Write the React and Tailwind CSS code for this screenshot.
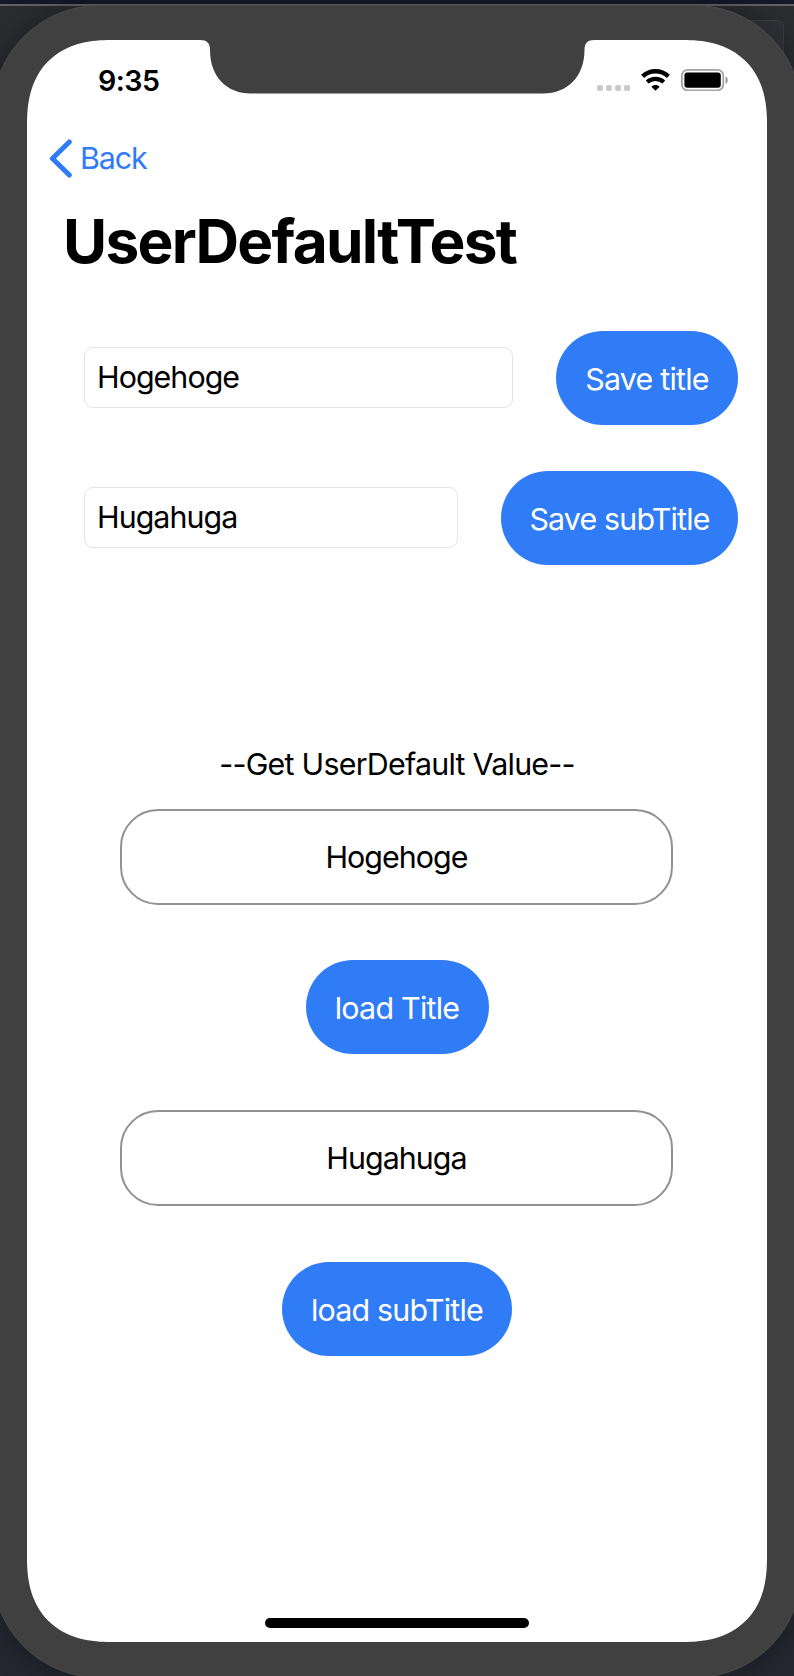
function Notch() {
  return (
    <svg className="absolute left-[173px] top-0" width="395" height="54" viewBox="0 0 395 54" fill="#404040">
      <path d="M0 -1V0C7 0 10 3 10 10C10 36 26 53.5 51 53.5H343C368 53.5 384.5 36 384.5 10C384.5 3 387.5 0 394.5 0V-1Z" />
    </svg>
  );
}

function StatusBar() {
  return (
    <div className="flex h-[80px] items-start pl-[71px]">
      <div className="mt-[23px] w-[64px] text-[28.6px] leading-[36px] font-semibold tracking-[-0.55px] whitespace-nowrap">9:35</div>
      <div className="mt-[29px] ml-[435px] flex items-start">
        <div className="mt-[16px] flex gap-[3px]">
          <span className="size-[6px] rounded-[2px] bg-[#cbcbcb]" />
          <span className="size-[6px] rounded-[2px] bg-[#cbcbcb]" />
          <span className="size-[6px] rounded-[2px] bg-[#cbcbcb]" />
          <span className="size-[6px] rounded-[2px] bg-[#cbcbcb]" />
        </div>
        <svg className="ml-[11px]" width="29" height="22" viewBox="0 0 29 22" fill="none" stroke="#000">
          <path d="M1.6 7.3C9 0.6 20 0.6 27.4 7.3" strokeWidth="4.5" />
          <path d="M6.2 13C11 8.7 18 8.7 22.8 13" strokeWidth="4.3" />
          <path d="M14.5 21.8L10.3 17.7C12.7 15.4 16.3 15.4 18.7 17.7Z" fill="#000" stroke="none" />
        </svg>
        <svg className="ml-[11px]" width="48" height="22" viewBox="0 0 48 22">
          <rect x="0.9" y="0.9" width="41.4" height="20.4" rx="5.6" fill="none" stroke="#a3a3a3" strokeWidth="1.8" />
          <rect x="3.4" y="3.4" width="36.4" height="15.4" rx="3" fill="#000" />
          <path d="M44.6 7.4C47.4 8.6 47.4 13.6 44.6 14.8Z" fill="#8f8f8f" />
        </svg>
      </div>
    </div>
  );
}

function Pill({ children, className }) {
  return (
    <button className={"flex h-[94px] shrink-0 items-center justify-center rounded-full bg-[#307cf7] text-[30.4px] text-white whitespace-nowrap " + className}>
      <span className="pt-[3px]">{children}</span>
    </button>
  );
}

function Field({ value, className }) {
  return (
    <div className={"mb-[2px] h-[61px] rounded-[9px] border border-[#e4e4e4] pl-[12px] text-[30.4px] leading-[58px] tracking-[-0.95px] " + className}>{value}</div>
  );
}

function ValueBox({ children }) {
  return (
    <div className="mr-px flex h-[96px] w-[553px] items-center justify-center rounded-[38px] border-2 border-[#929295] pt-[2px] text-[30.4px] tracking-[-0.95px]">
      {children}
    </div>
  );
}

export default function App() {
  return (
    <div className="relative h-[1676px] w-[794px] overflow-hidden bg-linear-to-b from-[#2a2c2f] to-[#242730] font-[Inter,sans-serif] text-black">
      <div className="h-[4px] bg-[#141a29]" />
      <div className="h-[2px] bg-[#626366]" />
      <div className="absolute top-[20px] right-[10px] h-[80px] w-[60px] rounded-[6px] border border-[#3d3e42] bg-[#313237]" />
      <div className="absolute top-[5px] left-[-8px] h-[1673px] w-[810px] rounded-[107px] border border-[#4a4a4a] bg-[#404040] px-[34px] pt-[34px] shadow-[0_0_30px_rgba(0,0,0,0.35)]">
        <div className="relative h-[1602px] w-[740px] overflow-hidden rounded-[84px] bg-white [corner-shape:superellipse(1.25)]">
          <Notch />
          <StatusBar />
          <div className="mt-[17px] flex h-[42px] items-center pl-[22px] text-[#307cf7]">
            <svg width="24" height="40" viewBox="0 0 24 40" fill="none" stroke="currentColor" strokeWidth="5" strokeLinecap="round" strokeLinejoin="round">
              <path d="M20.3 4L3.4 20.5L20.3 37" />
            </svg>
            <span className="ml-[7px] pt-px text-[30.4px] tracking-[-1.1px]">Back</span>
          </div>
          <h1 className="mt-[27px] mb-[53px] pl-[36px] text-[60.3px] leading-[72px] font-bold tracking-[-1.7px] whitespace-nowrap">UserDefaultTest</h1>

          <div className="flex items-center pl-[57px]">
            <Field value="Hogehoge" className="w-[429px]" />
            <Pill className="ml-[43px] w-[182px] tracking-[-0.75px]">Save title</Pill>
          </div>
          <div className="mt-[46px] flex items-center pl-[57px]">
            <Field value="Hugahuga" className="w-[374px]" />
            <Pill className="ml-[43px] w-[237px] tracking-[-0.85px]">Save subTitle</Pill>
          </div>

          <div className="mt-[179px] flex flex-col items-center">
            <div className="text-[30.4px] leading-[40px] tracking-[-0.75px] whitespace-nowrap">--Get UserDefault Value--</div>
            <div className="h-[25px]" />
            <ValueBox>Hogehoge</ValueBox>
            <Pill className="mt-[55px] mb-[56px] w-[183px] tracking-[-0.75px]">load Title</Pill>
            <ValueBox>Hugahuga</ValueBox>
            <Pill className="mt-[56px] w-[230px] tracking-[-0.8px]">load subTitle</Pill>
            <div className="mt-[262px] h-[10px] w-[264px] rounded-full bg-black" />
          </div>
        </div>
      </div>
    </div>
  );
}
